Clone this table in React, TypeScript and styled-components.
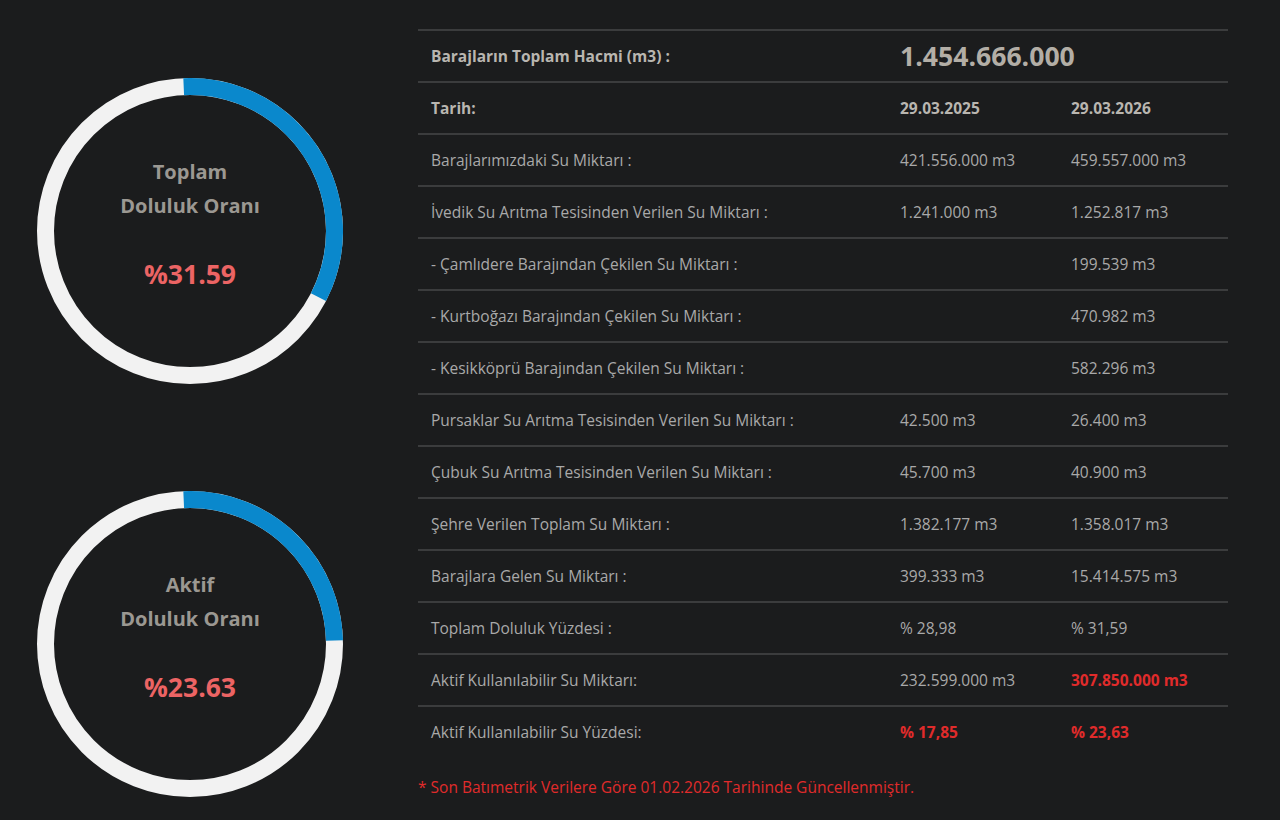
import React from 'react'
import styled, { createGlobalStyle } from 'styled-components'

interface Row {
    label: string
    prev?: string
    curr?: string
    prevRed?: boolean
    currRed?: boolean
}

const rows: Row[] = [
    { label: 'Barajlarımızdaki Su Miktarı :', prev: '421.556.000 m3', curr: '459.557.000 m3' },
    { label: 'İvedik Su Arıtma Tesisinden Verilen Su Miktarı :', prev: '1.241.000 m3', curr: '1.252.817 m3' },
    { label: '- Çamlıdere Barajından Çekilen Su Miktarı :', curr: '199.539 m3' },
    { label: '- Kurtboğazı Barajından Çekilen Su Miktarı :', curr: '470.982 m3' },
    { label: '- Kesikköprü Barajından Çekilen Su Miktarı :', curr: '582.296 m3' },
    { label: 'Pursaklar Su Arıtma Tesisinden Verilen Su Miktarı :', prev: '42.500 m3', curr: '26.400 m3' },
    { label: 'Çubuk Su Arıtma Tesisinden Verilen Su Miktarı :', prev: '45.700 m3', curr: '40.900 m3' },
    { label: 'Şehre Verilen Toplam Su Miktarı :', prev: '1.382.177 m3', curr: '1.358.017 m3' },
    { label: 'Barajlara Gelen Su Miktarı :', prev: '399.333 m3', curr: '15.414.575 m3' },
    { label: 'Toplam Doluluk Yüzdesi :', prev: '% 28,98', curr: '% 31,59' },
    { label: 'Aktif Kullanılabilir Su Miktarı:', prev: '232.599.000 m3', curr: '307.850.000 m3', currRed: true },
    { label: 'Aktif Kullanılabilir Su Yüzdesi:', prev: '% 17,85', curr: '% 23,63', prevRed: true, currRed: true },
]

const GlobalStyle = createGlobalStyle`
    html, body {
        margin: 0;
        padding: 0;
        background-color: #1b1c1d;
    }
    body {
        font-family: 'Open Sans', 'Liberation Sans', sans-serif;
    }
`

const Page = styled.div`
    display: flex;
    align-items: flex-start;
    width: 1280px;
    height: 820px;
    padding-top: 29px;
    box-sizing: border-box;
    overflow: hidden;
`

const GaugeColumn = styled.div`
    width: 380px;
    flex-shrink: 0;
    display: flex;
    flex-direction: column;
    align-items: center;
    gap: 107px;
    padding-top: 49px;
`

const Gauge = styled.div`
    position: relative;
    width: 306px;
    height: 306px;
`

const GaugeSvg = styled.svg`
    display: block;
`

const GaugeText = styled.div`
    position: absolute;
    inset: 0;
    display: flex;
    flex-direction: column;
    align-items: center;
    padding-top: 77px;
    box-sizing: border-box;
`

const GaugeTitle = styled.div`
    font-size: 20px;
    font-weight: 700;
    line-height: 34px;
    color: #9b9892;
    text-align: center;
`

const GaugeValue = styled.div`
    margin-top: 33px;
    font-size: 26.5px;
    font-weight: 700;
    color: #ec6464;
`

const TableWrap = styled.div`
    width: 810px;
    margin-left: 38px;
`

const Table = styled.div`
    display: grid;
    grid-template-columns: 469px 171px 170px;
`

const Cell = styled.div<{ $bold?: boolean; $red?: boolean; $big?: boolean }>`
    height: 52px;
    box-sizing: border-box;
    border-top: 2px solid #3b3c3d;
    display: flex;
    align-items: center;
    padding-left: 13px;
    font-size: ${p => (p.$big ? '26.6px' : '15.5px')};
    font-weight: ${p => (p.$bold || p.$red || p.$big ? 700 : 400)};
    color: ${p => (p.$red ? '#e02b2b' : p.$big ? '#b3aea6' : p.$bold ? '#b9b6b0' : '#a9a9a9')};
    white-space: nowrap;
`

const SpanCell = styled(Cell)`
    grid-column: span 2;
`

const Note = styled.div`
    margin-top: 19px;
    font-size: 15.5px;
    color: #e02b2b;
`

const Ring: React.FC<{ percent: number; title: string[]; value: string }> = ({ percent, title, value }) => {
    const size = 306
    const stroke = 17
    const r = (size - stroke) / 2
    const c = 2 * Math.PI * r
    // arc drawn slightly wider than the value, as in the original chart
    const sweep = percent * 3.6 + 6
    return (
        <Gauge>
            <GaugeSvg width={size} height={size} viewBox={`0 0 ${size} ${size}`}>
                <circle cx={size / 2} cy={size / 2} r={r} fill="none" stroke="#f2f2f2" strokeWidth={stroke} />
                <circle
                    cx={size / 2}
                    cy={size / 2}
                    r={r}
                    fill="none"
                    stroke="#0a88cc"
                    strokeWidth={stroke}
                    strokeDasharray={`${(c * sweep) / 360} ${c}`}
                    transform={`rotate(-92.5 ${size / 2} ${size / 2})`}
                />
            </GaugeSvg>
            <GaugeText>
                {title.map(t => (
                    <GaugeTitle key={t}>{t}</GaugeTitle>
                ))}
                <GaugeValue>{value}</GaugeValue>
            </GaugeText>
        </Gauge>
    )
}

const App: React.FC = () => {
    return (
        <>
            <GlobalStyle />
            <Page>
                <GaugeColumn>
                    <Ring percent={31.59} title={['Toplam', 'Doluluk Oranı']} value="%31.59" />
                    <Ring percent={23.63} title={['Aktif', 'Doluluk Oranı']} value="%23.63" />
                </GaugeColumn>
                <TableWrap>
                    <Table>
                        <Cell $bold>Barajların Toplam Hacmi (m3) :</Cell>
                        <SpanCell $big>1.454.666.000</SpanCell>
                        <Cell $bold>Tarih:</Cell>
                        <Cell $bold>29.03.2025</Cell>
                        <Cell $bold>29.03.2026</Cell>
                        {rows.map(row => (
                            <React.Fragment key={row.label}>
                                <Cell>{row.label}</Cell>
                                <Cell $red={row.prevRed}>{row.prev}</Cell>
                                <Cell $red={row.currRed}>{row.curr}</Cell>
                            </React.Fragment>
                        ))}
                    </Table>
                    <Note>* Son Batımetrik Verilere Göre 01.02.2026 Tarihinde Güncellenmiştir.</Note>
                </TableWrap>
            </Page>
        </>
    )
}

export default App
